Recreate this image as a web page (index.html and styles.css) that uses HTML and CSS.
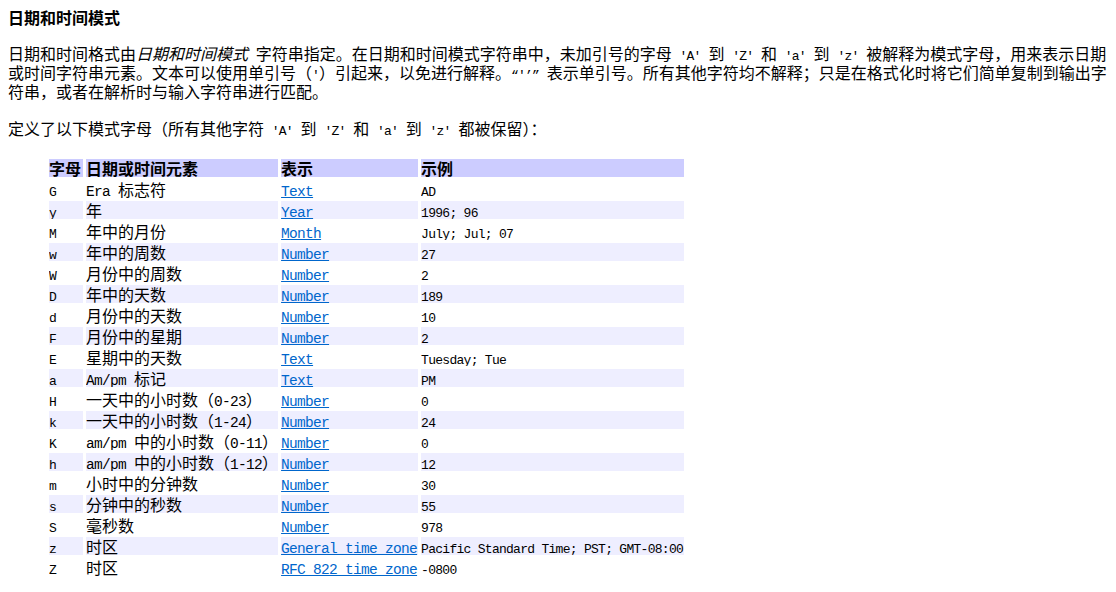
FILE: index.html
```html
<!DOCTYPE html>
<html lang="zh-CN">
<head>
<meta charset="utf-8">
<title>日期和时间模式</title>
<link rel="stylesheet" href="styles.css">
</head>
<body>
<h4 class="title">日期和时间模式</h4>
<p class="para first">日期和时间格式由<em>日期和时间模式</em> 字符串指定。在日期和时间模式字符串中，未加引号的字母 <code>'A'</code> 到 <code>'Z'</code> 和 <code>'a'</code> 到 <code>'z'</code> 被解释为模式字母，用来表示日期或时间字符串元素。文本可以使用单引号（<code>'</code>）引起来，以免进行解释。<code>“'’”</code> 表示单引号。所有其他字符均不解释；只是在格式化时将它们简单复制到输出字符串，或者在解析时与输入字符串进行匹配。</p>
<p class="para">定义了以下模式字母（所有其他字符 <code>'A'</code> 到 <code>'Z'</code> 和 <code>'a'</code> 到 <code>'z'</code> 都被保留）：</p>
<table class="fmt">
<thead>
<tr class="hd"><th class="c1">字母</th><th class="c2">日期或时间元素</th><th class="c3">表示</th><th class="c4">示例</th></tr>
</thead>
<tbody>
<tr><td><code>G</code></td><td><span class="lat">Era </span>标志符</td><td><a href="#text">Text</a></td><td><code>AD</code></td></tr>
<tr class="alt"><td><code>y</code></td><td>年</td><td><a href="#year">Year</a></td><td><code>1996; 96</code></td></tr>
<tr><td><code>M</code></td><td>年中的月份</td><td><a href="#month">Month</a></td><td><code>July; Jul; 07</code></td></tr>
<tr class="alt"><td><code>w</code></td><td>年中的周数</td><td><a href="#number">Number</a></td><td><code>27</code></td></tr>
<tr><td><code>W</code></td><td>月份中的周数</td><td><a href="#number">Number</a></td><td><code>2</code></td></tr>
<tr class="alt"><td><code>D</code></td><td>年中的天数</td><td><a href="#number">Number</a></td><td><code>189</code></td></tr>
<tr><td><code>d</code></td><td>月份中的天数</td><td><a href="#number">Number</a></td><td><code>10</code></td></tr>
<tr class="alt"><td><code>F</code></td><td>月份中的星期</td><td><a href="#number">Number</a></td><td><code>2</code></td></tr>
<tr><td><code>E</code></td><td>星期中的天数</td><td><a href="#text">Text</a></td><td><code>Tuesday; Tue</code></td></tr>
<tr class="alt"><td><code>a</code></td><td><span class="lat">Am/pm </span>标记</td><td><a href="#text">Text</a></td><td><code>PM</code></td></tr>
<tr><td><code>H</code></td><td>一天中的小时数（<span class="lat">0-23</span>）</td><td><a href="#number">Number</a></td><td><code>0</code></td></tr>
<tr class="alt"><td><code>k</code></td><td>一天中的小时数（<span class="lat">1-24</span>）</td><td><a href="#number">Number</a></td><td><code>24</code></td></tr>
<tr><td><code>K</code></td><td><span class="lat">am/pm </span>中的小时数（<span class="lat">0-11</span>）</td><td><a href="#number">Number</a></td><td><code>0</code></td></tr>
<tr class="alt"><td><code>h</code></td><td><span class="lat">am/pm </span>中的小时数（<span class="lat">1-12</span>）</td><td><a href="#number">Number</a></td><td><code>12</code></td></tr>
<tr><td><code>m</code></td><td>小时中的分钟数</td><td><a href="#number">Number</a></td><td><code>30</code></td></tr>
<tr class="alt"><td><code>s</code></td><td>分钟中的秒数</td><td><a href="#number">Number</a></td><td><code>55</code></td></tr>
<tr><td><code>S</code></td><td>毫秒数</td><td><a href="#number">Number</a></td><td><code>978</code></td></tr>
<tr class="alt"><td><code>z</code></td><td>时区</td><td><a href="#timezone">General time zone</a></td><td><code>Pacific Standard Time; PST; GMT-08:00</code></td></tr>
<tr><td><code>Z</code></td><td>时区</td><td><a href="#rfc822timezone">RFC 822 time zone</a></td><td><code>-0800</code></td></tr>
</tbody>
</table>
</body>
</html>
```

FILE: styles.css
```css
html, body {
  background: #ffffff;
}
body {
  margin: 8px;
  color: #000000;
  font-family: "Noto Sans CJK SC", "Noto Sans", sans-serif;
  font-size: 16px;
  line-height: 19px;
}
.title {
  margin: 0;
  font-size: 16px;
  font-weight: bold;
  line-height: 19px;
}
.para {
  margin: 18px 0 0 0;
  font-size: 16px;
  line-height: 19px;
  word-spacing: 4.2px;
}
.para.first {
  margin-top: 17px;
}
.para em {
  font-style: italic;
}
code {
  font-family: "Liberation Mono", "Noto Sans CJK SC", monospace;
  font-size: 13px;
  letter-spacing: -0.8px;
  line-height: 10px;
  word-spacing: 0;
}
.lat {
  font-family: "Liberation Mono", "Noto Sans CJK SC", monospace;
  font-size: 14.5px;
  letter-spacing: -0.7px;
  line-height: 10px;
}
.fmt {
  margin: 18px 0 0 38px;
  border-collapse: separate;
  border-spacing: 3px;
  table-layout: fixed;
}
.fmt th,
.fmt td {
  padding: 0;
  height: 18px;
  line-height: 18px;
  white-space: nowrap;
  text-align: left;
  vertical-align: middle;
  overflow: hidden;
}
.fmt th {
  font-weight: bold;
  font-size: 16px;
}
.hd th {
  background: #ccccff;
}
.alt td {
  background: #eeeeff;
}
.c1 { width: 34px; }
.c2 { width: 191px; }
.c3 { width: 137px; }
.c4 { width: 263px; }
.fmt td code {
  font-size: 13px;
  letter-spacing: -0.72px;
}
.fmt a {
  font-family: "Liberation Mono", "Noto Sans CJK SC", monospace;
  font-size: 14.5px;
  letter-spacing: -0.7px;
  line-height: 10px;
  color: #0066cc;
  text-decoration: underline;
}
```
